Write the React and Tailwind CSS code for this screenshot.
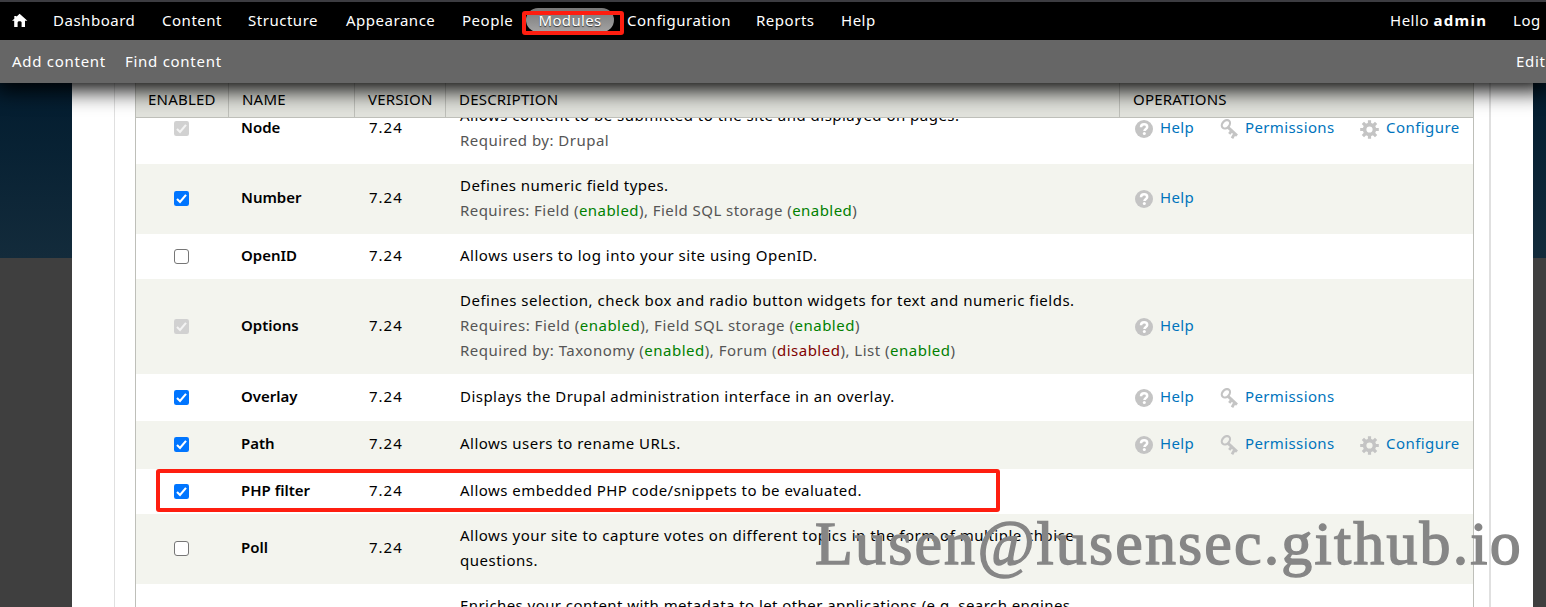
import React from "react";

const E = () => <span className="text-[#008000]">enabled</span>;
const D = () => <span className="text-[#800000]">disabled</span>;

const HelpIcon = () => (
  <svg className="h-[18px] w-[18px] shrink-0" viewBox="0 0 18 18">
    <circle cx="9" cy="9" r="9" fill="#c4c4c4" />
    <path d="M6 7.2C6 5.3 7.2 4.2 9.1 4.2S12.2 5.3 12.2 6.9C12.2 8.9 9.6 9 9.4 11" fill="none" stroke="#fff" strokeWidth="2.5" />
    <circle cx="9.3" cy="13.6" r="1.5" fill="#fff" />
  </svg>
);

const KeyIcon = () => (
  <svg className="h-5 w-[18px] shrink-0" viewBox="0 0 18 20" fill="none" stroke="#c4c4c4">
    <ellipse cx="5.9" cy="5.3" rx="3.5" ry="4.7" strokeWidth="2.2" transform="rotate(42 5.9 5.3)" />
    <path d="M8.4 8.6L17 16.6M11.6 12l-2.4 2.8M14.6 14.8l-2.6 4.4" strokeWidth="2.8" />
  </svg>
);

const GearIcon = () => (
  <svg className="h-[19px] w-[19px] shrink-0" viewBox="-9.5 -9.5 19 19" fill="none" stroke="#c4c4c4">
    <circle r="4.9" strokeWidth="3.6" />
    <path d="M0-9.3V-5M0 5V9.3M-9.3 0H-5M5 0H9.3M-6.6-6.6L-4-4M4 4L6.6 6.6M-6.6 6.6L-4 4M4-4L6.6-6.6" strokeWidth="3.2" />
  </svg>
);

const Check = ({ state }) => {
  if (state === "off") return <span className="block h-[15px] w-[15px] rounded-[3px] border border-[#767676] bg-white" />;
  const on = state === "on";
  return (
    <svg className="h-[15px] w-[15px]" viewBox="0 0 15 15">
      <rect width="15" height="15" rx="2.2" fill={on ? "#0075ff" : "#d1d1d1"} />
      <path d="M3 8.1L6 11L12 3.8" fill="none" stroke={on ? "#fff" : "#f3f3f3"} strokeWidth="2.1" />
    </svg>
  );
};

const rows = [
  { name: "Node", state: "locked", h: "h-[70px]", ops: 3, desc: "pb-[2px] tracking-[0.48px]", lines: ["Allows content to be submitted to the site and displayed on pages.", <>Required by: Drupal</>] },
  { name: "Number", state: "on", h: "h-[70px]", ops: 1, desc: "pb-[2px] tracking-[0.45px]", lines: ["Defines numeric field types.", <>Requires: Field (<E />), Field SQL storage (<E />)</>] },
  { name: "OpenID", state: "off", h: "h-[45px]", ops: 0, desc: "pb-[2px] tracking-[0.51px]", lines: ["Allows users to log into your site using OpenID."] },
  { name: "Options", state: "locked", h: "h-[95px]", ops: 1, desc: "pb-[2px] tracking-[0.5px]", lines: ["Defines selection, check box and radio button widgets for text and numeric fields.", <>Requires: Field (<E />), Field SQL storage (<E />)</>, <>Required by: Taxonomy (<E />), Forum (<D />), List (<E />)</>] },
  { name: "Overlay", state: "on", h: "h-[47px]", ops: 2, desc: "pb-[2px] tracking-[0.46px]", lines: ["Displays the Drupal administration interface in an overlay."] },
  { name: "Path", state: "on", h: "h-[48px]", ops: 3, desc: "pb-1 tracking-[0.48px]", lines: ["Allows users to rename URLs."] },
  { name: "PHP filter", state: "on", h: "h-[45px]", ops: 0, desc: "pb-[2px] tracking-[0.47px]", lines: ["Allows embedded PHP code/snippets to be evaluated."] },
  { name: "Poll", state: "off", h: "h-[70px]", ops: 0, desc: "pb-[2px] tracking-[0.5px]", lines: ["Allows your site to capture votes on different topics in the form of multiple choice", "questions."] },
  { name: "", state: "", h: "h-[70px]", ops: 0, desc: "pb-[2px] tracking-[0.43px]", lines: ["Enriches your content with metadata to let other applications (e.g. search engines,", "aggregators) better understand its relationships and attributes."] },
];

const cols = "grid grid-cols-[93px_126px_91px_674px_1fr]";

const Row = ({ r, odd }) => (
  <div className={`${cols} ${r.h} items-center ${odd ? "bg-[#f3f4ee]" : "bg-white"}`}>
    <div className="pb-px pl-[38px]">{r.state && <Check state={r.state} />}</div>
    <div className="pb-[3px] pl-3 font-semibold tracking-normal text-black">{r.name}</div>
    <div className="pb-[3px] pl-[14px] tracking-[1px]">{r.name && "7.24"}</div>
    <div className={`pl-[14px] leading-[25px] ${r.desc}`}>
      {r.lines.map((l, i) => (
        <div key={i} className={`whitespace-nowrap ${typeof l === "string" ? "text-black" : "text-[#555]"}`}>{l}</div>
      ))}
    </div>
    <div className="flex items-center pl-[15px] tracking-[0.38px] text-[#0074bd]">
      {r.ops > 0 && <div className="flex w-[85px] items-center gap-[7px]"><HelpIcon /><span className="pb-[3px]">Help</span></div>}
      {r.ops > 1 && <div className="flex w-[140px] items-center gap-[7px]"><KeyIcon /><span className="pb-[3px]">Permissions</span></div>}
      {r.ops > 2 && <div className="flex items-center gap-[7px]"><GearIcon /><span className="pb-[3px] tracking-[0.45px]">Configure</span></div>}
    </div>
  </div>
);

const menu = [
  ["Dashboard", "w-[109px]"], ["Content", "w-[86px]"], ["Structure", "w-[98px]"], ["Appearance", "w-[116px]"], ["People", "w-[64px]"],
];
const menu2 = [["Configuration", "w-[129px]"], ["Reports", "w-[85px]"], ["Help", "w-[60px]"]];

export default function App() {
  return (
    <div className="relative flex h-[607px] w-[1546px] flex-col overflow-hidden bg-white font-['Noto_Sans','Open_Sans',sans-serif] text-[15px] text-black">
      <nav className="relative z-20 flex h-10 shrink-0 items-center whitespace-nowrap border-t-2 border-[#3c3c41] bg-black pb-[2px] tracking-[0.52px] text-white">
        <svg className="ml-3 mr-[25px] h-[15px] w-4 shrink-0" viewBox="0 0 16 15" fill="#fff">
          <path d="M7.6 .7L15.4 7.8H13V14H9.6V9.6C9.6 7.8 5.6 7.8 5.6 9.6V14H2.2V7.8H0L2.3 5.7V3H4.4V3.7Z" />
        </svg>
        {menu.map(([t, w]) => <span key={t} className={`${w} shrink-0`}>{t}</span>)}
        <span className="flex h-6 w-[88px] shrink-0 items-center justify-center rounded-full bg-linear-to-b from-[#787878] to-[#a3a3a3] tracking-[0.3px] [text-shadow:0_1px_1px_#333]">Modules</span>
        <span className="w-[13px] shrink-0" />
        {menu2.map(([t, w]) => <span key={t} className={`${w} shrink-0`}>{t}</span>)}
        <span className="ml-auto w-[123px] shrink-0">Hello <b className="tracking-[1.3px]">admin</b></span>
        <span className="w-[33px] shrink-0 overflow-hidden"><span className="mr-3">Log</span>out</span>
        <div className="absolute left-[522px] top-[9px] h-6 w-[102px] rounded-[3px] border-4 border-[#fe1e10]" />
      </nav>
      <div className="relative z-10 flex h-[43px] shrink-0 items-center whitespace-nowrap bg-[#666] tracking-[0.72px] text-white shadow-[0_3px_22px_4px_#000]">
        <span className="ml-3 w-[113px]">Add content</span>
        <span>Find content</span>
        <span className="ml-auto w-[30px] shrink-0">Edit shortcuts</span>
      </div>
      <main className="flex h-[524px]">
        <div className="flex w-[72px] shrink-0 flex-col bg-[#3f3f3f]">
          <div className="h-[175px] bg-linear-to-b from-[#031c2f] to-[#132b3b]" />
        </div>
        <div className="flex w-[1461px] shrink-0 pl-[42px] pr-[42px]">
          <div className="w-full border-l border-r-2 border-[#e0e0e0] pl-5 pr-4">
            <div className="relative h-[524px] w-[1339px] overflow-hidden border-x border-[#bebfb9] pt-[11px]">
              <div className={`${cols} absolute inset-x-0 top-0 h-[35px] border-b border-[#bebfb9] bg-[#e1e2dc] leading-[33px] tracking-[0.2px]`}>
                <div className="border-r border-[#bebfb9] pl-3">ENABLED</div>
                <div className="border-r border-[#bebfb9] pl-[13px]">NAME</div>
                <div className="border-r border-[#bebfb9] pl-[13px]">VERSION</div>
                <div className="border-r border-[#bebfb9] pl-[13px]">DESCRIPTION</div>
                <div className="pl-[13px]">OPERATIONS</div>
              </div>
              {rows.map((r, i) => <Row key={i} r={r} odd={i % 2 === 1} />)}
            </div>
          </div>
        </div>
        <div className="flex w-[13px] shrink-0 flex-col bg-[#3f3f3f]">
          <div className="h-[175px] bg-linear-to-b from-[#031c2f] to-[#132b3b]" />
        </div>
      </main>
      <div className="absolute left-[156px] top-[469px] h-[43px] w-[844px] rounded-[3px] border-4 border-[#fe1e10]" />
      <div className="absolute left-[815px] top-[507px] whitespace-nowrap font-['Liberation_Serif',serif] text-[62px] leading-[72px] tracking-[2.15px] text-[#868686] [-webkit-text-stroke:1.4px_#868686]">
        Lusen<span className="inline-block scale-y-[1.05] italic">@</span>lusensec.github.io
      </div>
    </div>
  );
}
